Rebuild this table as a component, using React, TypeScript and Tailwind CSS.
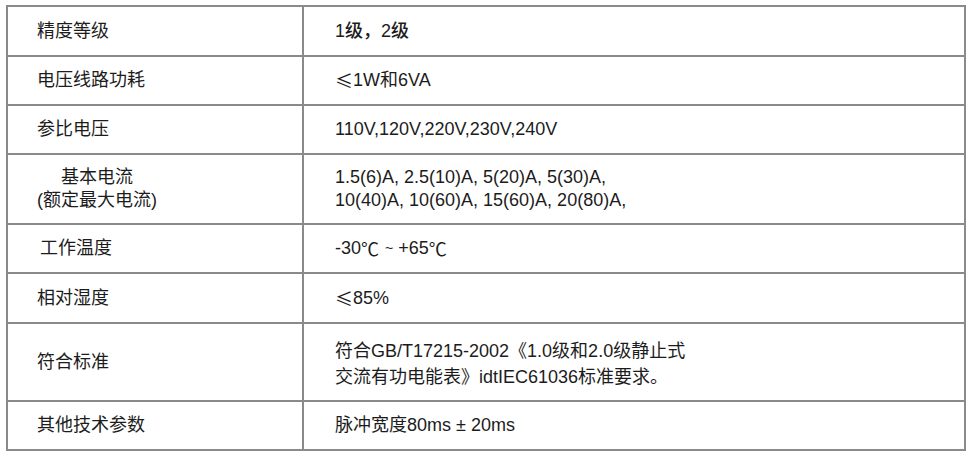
const rows: Array<{ h: string; label: React.ReactNode; value: React.ReactNode }> = [
  { h: 'h-[50px]', label: '精度等级', value: <span className="font-medium">1级，2级</span> },
  {
    h: 'h-[49px]',
    label: '电压线路功耗',
    value: (
      <>
        <span className="font-['Noto_Sans_CJK_SC']">≤</span>1W和6VA
      </>
    ),
  },
  { h: 'h-[49px]', label: '参比电压', value: '110V,120V,220V,230V,240V' },
  {
    h: 'h-[70px]',
    label: (
      <span className="inline-flex flex-col items-center leading-[23px]">
        <span>基本电流</span>
        <span>(额定最大电流)</span>
      </span>
    ),
    value: (
      <div className="leading-[23px]">
        <div>1.5(6)A, 2.5(10)A, 5(20)A, 5(30)A,</div>
        <div>10(40)A, 10(60)A, 15(60)A, 20(80)A,</div>
      </div>
    ),
  },
  {
    h: 'h-[49px]',
    label: <span className="pl-[3px]">工作温度</span>,
    value: (
      <>
        -30<span className="font-['Noto_Sans_CJK_SC']">℃</span>
        <span className="ml-[6px] mr-[5px] text-[14px]">~</span>+65
        <span className="font-['Noto_Sans_CJK_SC']">℃</span>
      </>
    ),
  },
  {
    h: 'h-[50px]',
    label: '相对湿度',
    value: (
      <>
        <span className="font-['Noto_Sans_CJK_SC']">≤</span>85%
      </>
    ),
  },
  {
    h: 'h-[78px]',
    label: '符合标准',
    value: (
      <div className="leading-[26px] pt-[4px]">
        <div>符合GB/T17215-2002《1.0级和2.0级静止式</div>
        <div>交流有功电能表》idtIEC61036标准要求。</div>
      </div>
    ),
  },
  { h: 'h-[49px]', label: '其他技术参数', value: '脉冲宽度80ms ± 20ms' },
];

export default function App() {
  return (
    <div className="w-[971px] h-[456px] bg-white pt-[5px] pl-[6px] font-['Liberation_Sans','Noto_Sans_CJK_SC',sans-serif] text-[18px] text-[#1c1c1c]">
      <div className="w-[960px] border-x-2 border-b-2 border-[#8a8a8a]">
        {rows.map((r, i) => (
          <div key={i} className={`flex border-t-2 border-[#8a8a8a] ${r.h}`}>
            <div className="w-[294px] shrink-0 flex items-center pl-[29px]">{r.label}</div>
            <div className="flex-1 flex items-center pl-[31px] border-l-2 border-[#8a8a8a]">{r.value}</div>
          </div>
        ))}
      </div>
    </div>
  );
}
